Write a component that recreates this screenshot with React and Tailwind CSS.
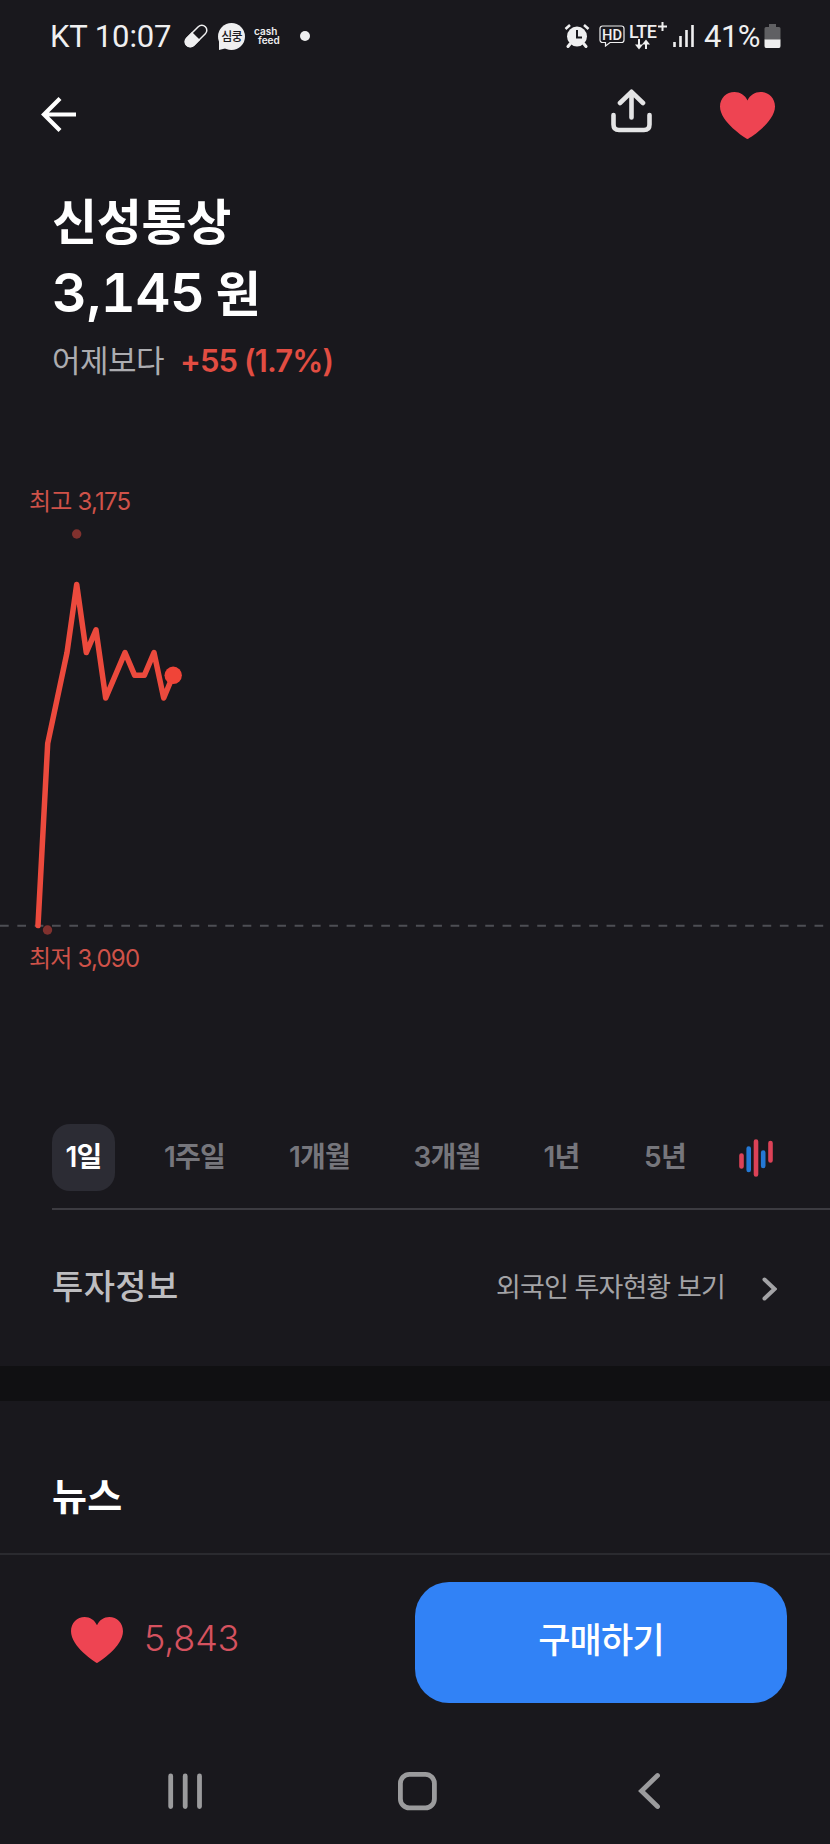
import { useState } from "react";

const periods = [
  { label: "1일", slot: "w-[63px]" },
  { label: "1주일", slot: "ml-[33px] w-[93px]" },
  { label: "1개월", slot: "ml-[32px] w-[93px]" },
  { label: "3개월", slot: "ml-[32px] w-[98px]" },
  { label: "1년", slot: "ml-[32px] w-[67px]" },
  { label: "5년", slot: "ml-[34px] w-[72px]" },
];

const prices = [
  [38, 409.5],
  [47.7, 227.5],
  [67, 136.6],
  [76.7, 68.4],
  [86.3, 136.6],
  [96, 113.8],
  [105.7, 182],
  [125, 136.6],
  [134.7, 159.3],
  [144.3, 159.3],
  [154, 136.6],
  [163.7, 182],
  [173.2, 159.3],
];

const Heart = ({ className }) => (
  <svg viewBox="0 0 55 47" preserveAspectRatio="none" className={className}>
    <path
      d="M27.5 47C25 46 0 30 0 14.5C0 6 6.5 0 14.5 0C20 0 25 3 27.5 8.5C30 3 35 0 40.5 0C48.5 0 55 6 55 14.5C55 30 30 46 27.5 47Z"
      fill="#ee4452"
    />
  </svg>
);

const StatusBar = () => (
  <div className="flex h-[72px] items-center pl-[50px] font-['Roboto',sans-serif] text-[31px] text-[#efeff0]">
    <span className="w-[122px] whitespace-nowrap pt-[2px] leading-[36px] tracking-[-0.1px]">KT 10:07</span>
    <svg viewBox="0 0 24 24" className="ml-3 h-[24px] w-[24px]">
      <g transform="rotate(-45 12 12)">
        <rect x="-1.2" y="7" width="26.4" height="10" rx="5" fill="none" stroke="#efeff0" strokeWidth="1.5" />
        <path d="M12 6.3H4A5.7 5.7 0 0 0 4 17.7H12Z" fill="#efeff0" />
      </g>
    </svg>
    <div className="relative ml-[10px] flex h-[27px] w-[27px] items-center justify-center rounded-full bg-[#efeff0]">
      <svg viewBox="0 0 9 9" className="absolute bottom-0 left-[1px] h-[9px] w-[9px]">
        <path d="M0 0V9L8 7Z" fill="#efeff0" />
      </svg>
      <span className="relative whitespace-nowrap font-['Noto_Sans_CJK_KR',sans-serif] text-[12px] font-medium leading-[14px] tracking-[-0.8px] text-[#19181d]">
        심쿵
      </span>
    </div>
    <div className="ml-[9px] w-[29px] font-['Inter',sans-serif] text-[10px] font-semibold leading-[9px]">
      <div>cash</div>
      <div className="pl-[4px]">feed</div>
    </div>
    <div className="ml-[17px] h-[10px] w-[10px] rounded-full bg-[#efeff0]" />

    <svg viewBox="0 0 26 24" className="ml-[254px] h-[24px] w-[26px]" fill="none" stroke="#efeff0">
      <circle cx="13" cy="12.5" r="10" fill="#efeff0" stroke="none" />
      <path d="M1.5 5L6 1M24.5 5L20 1" strokeWidth="2.6" />
      <path d="M6 20L4 22.5M20 20L22 22.5" strokeWidth="3" strokeLinecap="round" />
      <path d="M13 6V13.5H18" stroke="#19181d" strokeWidth="2" />
    </svg>
    <svg viewBox="0 0 26 22" className="ml-[9px] h-[22px] w-[26px]" fill="none" stroke="#efeff0">
      <path
        d="M3.5 1H22.5A2.5 2.5 0 0 1 25 3.5V15A2.5 2.5 0 0 1 22.5 17.5H11L6.5 21V17.5H3.5A2.5 2.5 0 0 1 1 15V3.5A2.5 2.5 0 0 1 3.5 1Z"
        strokeWidth="1.2"
      />
      <text x="3" y="14.5" fontSize="14.5" fontWeight="500" textLength="20" lengthAdjust="spacingAndGlyphs" fill="#efeff0" stroke="none" fontFamily="Roboto, sans-serif">
        HD
      </text>
    </svg>
    <svg viewBox="0 0 39 30" className="ml-[4px] h-[30px] w-[39px]" fill="#efeff0">
      <text x="0" y="16.5" fontSize="18" fontWeight="500" textLength="28" fontFamily="Roboto, sans-serif">
        LTE
      </text>
      <path d="M33.5 1V10M29 5.5H38" stroke="#efeff0" strokeWidth="2" />
      <path d="M10 18V26M17 28V21" stroke="#efeff0" strokeWidth="2" />
      <path d="M6 23.5H14L10 28.5ZM13 23.5H21L17 18.5Z" />
    </svg>
    <svg viewBox="0 0 21 22" className="ml-[5px] h-[22px] w-[21px]" stroke="#efeff0" strokeWidth="2.6">
      <path d="M1.5 17V22M7.5 11V22M13.5 5V22M19.5 0V22" />
    </svg>
    <span className="ml-[10px] w-[57px] whitespace-nowrap pt-[2px] leading-[36px] tracking-[-0.5px]">41%</span>
    <svg viewBox="0 0 17 24" className="ml-[3px] h-[24px] w-[17px]">
      <path d="M5 0H12V3H15Q16.5 3 16.5 4.5V16H0.5V4.5Q0.5 3 2 3H5Z" fill="#606063" />
      <path d="M0.5 15.5H16.5V22Q16.5 24 15 24H2Q0.5 24 0.5 22Z" fill="#efeff0" />
    </svg>
  </div>
);

const Header = () => (
  <div className="flex h-[88px] items-start pl-[41px]">
    <button aria-label="뒤로" className="mt-[25px]">
      <svg viewBox="0 0 35 35" className="h-[35px] w-[35px]" fill="none" stroke="#fff" strokeWidth="4.2">
        <path d="M19 1.5L3 17.5L19 33.5M3 17.5H35" />
      </svg>
    </button>
    <button aria-label="공유" className="ml-[535px] mt-[17px]">
      <svg
        viewBox="0 0 41 44"
        className="h-[44px] w-[41px]"
        fill="none"
        stroke="#e4e4e5"
        strokeWidth="4.6"
        strokeLinecap="round"
        strokeLinejoin="round"
      >
        <path d="M20.5 28.5V3M9 14L20.5 2.8L32 14" />
        <path d="M2.5 26V35.5Q2.5 41 8 41H33Q38.5 41 38.5 35.5V26" />
      </svg>
    </button>
    <button aria-label="관심" className="ml-[68px] mt-[20px]">
      <Heart className="h-[47px] w-[55px]" />
    </button>
  </div>
);

const PriceChart = () => (
  <div className="h-[736px] pt-[95px] text-[24px] text-[#cf5249]">
    <p className="h-[43px] whitespace-nowrap pl-[29px] pt-px leading-[36px] tracking-[-0.8px]">최고 3,175</p>
    <svg viewBox="0 0 830 420" className="-mt-[10px] block h-[420px] w-[830px]">
      <path d="M0 409.7H830" stroke="#4d4e54" strokeWidth="2" strokeDasharray="8.7 8.63" />
      <circle cx="76.7" cy="18" r="4.7" fill="#80312e" />
      <circle cx="47.5" cy="414" r="4.7" fill="#80312e" />
      <polyline
        points={prices.map((p) => p.join(",")).join(" ")}
        fill="none"
        stroke="#ec4a3d"
        strokeWidth="5.5"
        strokeLinecap="round"
        strokeLinejoin="round"
      />
      <circle cx="173.2" cy="159.3" r="8.7" fill="#f04438" />
    </svg>
    <p className="mt-[5px] whitespace-nowrap pl-[29px] leading-[36px] tracking-[-0.8px]">최저 3,090</p>
  </div>
);

const PeriodTabs = () => {
  const [active, setActive] = useState("1일");

  return (
    <div className="ml-[52px] flex h-[86px] items-start border-b-2 border-[#3c3b41]">
      {periods.map((period) => (
        <button
          key={period.label}
          onClick={() => setActive(period.label)}
          className={`${period.slot} h-[67px] whitespace-nowrap rounded-[18px] pb-[2px] text-[28px] font-semibold tracking-[-0.8px] ${
            active === period.label ? "bg-[#2c2c34] text-white" : "text-[#76767c]"
          }`}
        >
          {period.label}
        </button>
      ))}
      <svg viewBox="0 0 35 38" className="ml-[38px] mt-[15px] h-[38px] w-[35px]" strokeWidth="4.6" strokeLinecap="round">
        <path d="M2.5 16.5V27.5M17 2.5V35.5M31.5 4V21.5" stroke="#dc4257" />
        <path d="M9.7 9.5V31M24.2 13.5V27" stroke="#2478d4" />
      </svg>
    </div>
  );
};

const BottomBar = () => (
  <div className="h-[291px] border-t-2 border-[#2a2a2f]">
    <div className="flex h-[178px] items-start pl-[71px]">
      <Heart className="mt-[62px] h-[46px] w-[52px]" />
      <span className="ml-[21px] mt-[60px] w-[101px] whitespace-nowrap text-[36px] font-light leading-[46px] tracking-[-0.2px] text-[#d5525f]">
        5,843
      </span>
      <button className="ml-[170px] mt-[27px] h-[121px] w-[372px] whitespace-nowrap rounded-[34px] bg-[#3182f6] pb-[4px] text-[35px] font-medium tracking-[-0.8px] text-white">
        구매하기
      </button>
    </div>
    <svg viewBox="0 0 492 40" className="ml-[168px] mt-[38px] block h-[40px] w-[492px]" fill="none" stroke="#9b9b9d" strokeWidth="4.8">
      <path d="M2.7 5V35.5M17.2 5V35.5M31.5 5V35.5" strokeLinecap="round" />
      <rect x="232.4" y="3.4" width="34" height="33.5" rx="9" />
      <path d="M489.5 4.5L473.5 20L489.5 35.5" strokeLinecap="round" />
    </svg>
  </div>
);

const App = () => (
  <div className="h-[1844px] w-[830px] overflow-hidden bg-[#19181d] font-['Inter','Noto_Sans_CJK_KR',sans-serif]">
    <StatusBar />
    <Header />

    <div className="h-[228px] pl-[52px] pt-[28px] text-white">
      <h1 className="whitespace-nowrap text-[49px] font-bold leading-[70px] tracking-[-0.3px]">신성통상</h1>
      <p className="whitespace-nowrap text-[54px] font-semibold leading-[70px]">
        <span className="tabular-nums tracking-[-0.3px]">3,145</span>
        <span className="ml-[11px] text-[49px] font-bold">원</span>
      </p>
      <p className="flex items-center whitespace-nowrap text-[31px] leading-[62px]">
        <span className="w-[128px] tracking-[-0.5px] text-[#acacb0]">어제보다</span>
        <span className="font-semibold tracking-[-0.9px] text-[#e24d42]">+55 (1.7%)</span>
      </p>
    </div>

    <PriceChart />
    <PeriodTabs />

    <div className="flex h-[156px] items-center pl-[52px]">
      <h2 className="w-[444px] whitespace-nowrap pb-[4px] text-[34px] font-medium tracking-[0.4px] text-[#bdbdc0]">투자정보</h2>
      <span className="w-[266px] whitespace-nowrap text-[27px] tracking-[-0.9px] text-[#a3a3a6]">외국인 투자현황 보기</span>
      <svg viewBox="0 0 15 24" className="mt-[2px] h-[24px] w-[15px]" fill="none" stroke="#a3a3a6" strokeWidth="4" strokeLinecap="round">
        <path d="M2.5 2.5L12.5 12L2.5 21.5" />
      </svg>
    </div>

    <div className="h-[35px] bg-[#101012]" />

    <div className="h-[152px] pl-[52px] pt-[67px]">
      <h2 className="whitespace-nowrap text-[38px] font-bold leading-[56px] tracking-[0.3px] text-white">뉴스</h2>
    </div>

    <BottomBar />
  </div>
);

export default App;
